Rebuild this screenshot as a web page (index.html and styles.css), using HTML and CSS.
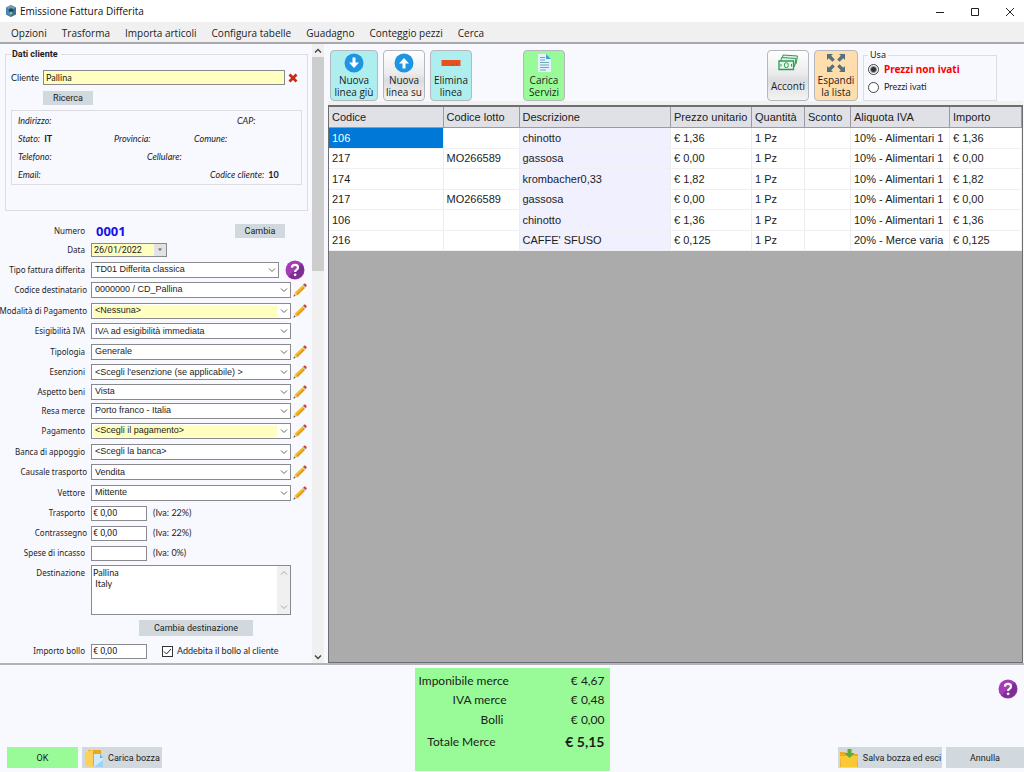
FILE: index.html
```html
<!DOCTYPE html>
<html lang="it">
<head>
<meta charset="utf-8">
<title>Emissione Fattura Differita</title>
<link rel="stylesheet" href="styles.css">
</head>
<body>
<svg class="defs" aria-hidden="true">
  <symbol id="pencil" viewBox="0 0 14 14">
    <path d="M.5 13.500 1.700 9.600 4.400 12.300z" fill="#e9c9a0"/>
    <path d="M.5 13.500 1.100 11.600 2.400 12.900z" fill="#444"/>
    <path d="M1.700 9.600 9.300 2.400 11.800 4.900 4.400 12.300z" fill="#f7bd22"/>
    <path d="M3.200 11.100 10.700 3.800 11.800 4.900 4.400 12.300z" fill="#e3981d"/>
    <path d="M9.300 2.400 10.200 1.500 12.700 4 11.800 4.900z" fill="#b9c4cc"/>
    <path d="M10.200 1.500 11 .8Q12 .2 13 1.200 14 2.200 13.500 3.200L12.700 4z" fill="#d03a22"/>
  </symbol>
  <symbol id="help" viewBox="0 0 20 20">
    <circle cx="10" cy="10" r="9.500" fill="#a43cb4"/>
    <path d="M16.700 3.300A9.500 9.500 0 0 1 3.300 16.700z" fill="#7c2f92"/>
    <path d="M6.900 7.600Q7 4.900 10 4.900 13 4.900 13 7.500 13 9 11.300 9.900 10.100 10.500 10.100 11.900" fill="none" stroke="#fff" stroke-width="2.200"/>
    <circle cx="10.100" cy="14.800" r="1.400" fill="#fff"/>
  </symbol>
</svg>

<header class="titlebar">
  <svg class="app-icon" viewBox="0 0 12 12"><path d="M6 0 11 2.500V9.500L6 12 1 9.500V2.500z" fill="#3b6f95"/><path d="M6 0 11 2.500 6 5 1 2.500z" fill="#6fa3a8"/><path d="M6 5V12L1 9.500V2.500z" fill="#4a86b8"/><circle cx="6" cy="5.500" r="2.200" fill="#1d3f78"/><circle cx="6" cy="8" r="1.500" fill="#9cc15a"/></svg>
  <h1>Emissione Fattura Differita</h1>
  <div class="window-buttons">
    <button aria-label="Riduci"><svg viewBox="0 0 10 10"><path d="M1 5.500H9"/></svg></button>
    <button aria-label="Ingrandisci"><svg viewBox="0 0 10 10"><path d="M1.500 1.500H8.500V8.500H1.500z"/></svg></button>
    <button aria-label="Chiudi"><svg viewBox="0 0 10 10"><path d="M1 1 9 9M9 1 1 9"/></svg></button>
  </div>
</header>
<nav class="menu">
  <button>Opzioni</button><button>Trasforma</button><button>Importa articoli</button><button>Configura tabelle</button><button>Guadagno</button><button>Conteggio pezzi</button><button>Cerca</button>
</nav>

<main class="main">
  <aside class="side">
    <div class="side-content">
      <fieldset class="client">
        <legend>Dati cliente</legend>
        <div class="client-row">
          <label for="cliente">Cliente</label>
          <input id="cliente" class="yellow" value="Pallina">
          <button class="clear" aria-label="Rimuovi cliente"><svg viewBox="0 0 10 10"><path d="M1.500 1.500 8.500 8.500M8.500 1.500 1.500 8.500" stroke="#c92a14" stroke-width="2.800"/></svg></button>
        </div>
        <button class="flat search">Ricerca</button>
        <div class="info">
          <div><i class="wide">Indirizzo:</i><i>CAP:</i></div>
          <div><i class="first">Stato: <b>IT</b></i><i class="second">Provincia:</i><i>Comune:</i></div>
          <div><i class="half">Telefono:</i><i>Cellulare:</i></div>
          <div><i class="most">Email:</i><i>Codice cliente: <b>10</b></i></div>
        </div>
      </fieldset>

      <form class="form">
        <span class="lab">Numero</span><div class="numrow"><strong>0001</strong><button type="button" class="flat change">Cambia</button></div>
        <label for="data">Data</label><div class="date"><input id="data" value="26/01/2022"><button type="button" aria-label="Apri calendario"><svg viewBox="0 0 6 4"><path d="M1 .5H5L3 3z" fill="#666"/></svg></button></div>
        <label for="tipo">Tipo fattura differita</label><div class="with-help"><select id="tipo" class="short"><option>TD01 Differita classica</option></select><button type="button" class="help" aria-label="Aiuto"><svg><use href="#help"/></svg></button></div>
        <label for="cod" class="near">Codice destinatario</label><select id="cod"><option>0000000 / CD_Pallina</option></select><button type="button" class="icon" aria-label="Modifica"><svg><use href="#pencil"/></svg></button>
        <label for="mod" class="near">Modalità di Pagamento</label><select id="mod" class="hl"><option>&lt;Nessuna&gt;</option></select><button type="button" class="icon" aria-label="Modifica"><svg><use href="#pencil"/></svg></button>
        <label for="esi">Esigibilità IVA</label><select id="esi"><option>IVA ad esigibilità immediata</option></select>
        <label for="tip">Tipologia</label><select id="tip"><option>Generale</option></select><button type="button" class="icon" aria-label="Modifica"><svg><use href="#pencil"/></svg></button>
        <label for="ese">Esenzioni</label><select id="ese"><option>&lt;Scegli l'esenzione (se applicabile) &gt;</option></select><button type="button" class="icon" aria-label="Modifica"><svg><use href="#pencil"/></svg></button>
        <label for="asp">Aspetto beni</label><select id="asp"><option>Vista</option></select><button type="button" class="icon" aria-label="Modifica"><svg><use href="#pencil"/></svg></button>
        <label for="resa">Resa merce</label><select id="resa"><option>Porto franco - Italia</option></select><button type="button" class="icon" aria-label="Modifica"><svg><use href="#pencil"/></svg></button>
        <label for="pag">Pagamento</label><select id="pag" class="hl"><option>&lt;Scegli il pagamento&gt;</option></select><button type="button" class="icon" aria-label="Modifica"><svg><use href="#pencil"/></svg></button>
        <label for="ban">Banca di appoggio</label><select id="ban"><option>&lt;Scegli la banca&gt;</option></select><button type="button" class="icon" aria-label="Modifica"><svg><use href="#pencil"/></svg></button>
        <label for="cau" class="near">Causale trasporto</label><select id="cau"><option>Vendita</option></select><button type="button" class="icon" aria-label="Modifica"><svg><use href="#pencil"/></svg></button>
        <label for="vet">Vettore</label><select id="vet"><option>Mittente</option></select><button type="button" class="icon" aria-label="Modifica"><svg><use href="#pencil"/></svg></button>
        <label for="tra">Trasporto</label><div class="money"><input id="tra" value="€ 0,00"><span>(Iva: 22%)</span></div>
        <label for="con" class="near">Contrassegno</label><div class="money"><input id="con" value="€ 0,00"><span>(Iva: 22%)</span></div>
        <label for="spe">Spese di incasso</label><div class="money"><input id="spe" value=""><span>(Iva: 0%)</span></div>
        <label for="des" class="top">Destinazione</label>
        <div class="dest"><textarea id="des">Pallina
 Italy</textarea><div class="mini-scroll"><svg viewBox="0 0 8 6"><path d="M1 4.500 4 1.500 7 4.500"/></svg><svg viewBox="0 0 8 6"><path d="M1 1.500 4 4.500 7 1.500"/></svg></div></div>
        <button type="button" class="flat dest-button">Cambia destinazione</button>
        <label for="bol">Importo bollo</label><div class="money"><input id="bol" value="€ 0,00"><label class="check"><input type="checkbox" checked>Addebita il bollo al cliente</label></div>
      </form>
    </div>
    <div class="scrollbar"><svg viewBox="0 0 8 6"><path d="M1 4.500 4 1.500 7 4.500"/></svg><div class="thumb"></div><svg viewBox="0 0 8 6"><path d="M1 1.500 4 4.500 7 1.500"/></svg></div>
  </aside>

  <section class="work">
    <div class="toolbar">
      <button class="tool aqua first-tool"><svg viewBox="0 0 20 20"><circle cx="10" cy="10" r="9.500" fill="#1d95e2"/><path d="M8.500 4.500H11.500V9.500H15L10 15 5 9.500H8.500z" fill="#fff"/></svg><span>Nuova<br>linea giù</span></button>
      <button class="tool silver"><svg viewBox="0 0 20 20"><circle cx="10" cy="10" r="9.500" fill="#1d95e2"/><path d="M8.500 15.500H11.500V10.500H15L10 5 5 10.500H8.500z" fill="#fff"/></svg><span>Nuova<br>linea su</span></button>
      <button class="tool aqua"><svg viewBox="0 0 20 20"><path d="M.5 7H19.500V13H.5z" fill="#e8501f"/><path d="M11 12H12M15 11H16" stroke="#a03a1a"/></svg><span>Elimina<br>linea</span></button>
      <button class="tool green"><svg viewBox="0 0 20 20"><path d="M4 1H12L17 6V19H4z" fill="#e4f3fb"/><path d="M12 1 17 6H12z" fill="#35a5e0"/><path d="M6 4.500H11M6 7H11M6 9.500H15M6 12H15M6 14.500H15M6 17H12" stroke="#6fa6c0"/></svg><span>Carica<br>Servizi</span></button>
      <span class="spacer"></span>
      <button class="tool silver acconti"><svg viewBox="0 0 20 20"><path d="M5 2 19.500 3 18 11 3 10z" fill="#e4f4e8" stroke="#2c9c50"/><path d="M3.500 4.500 18 5.500 16.500 13.500 2 12.500z" fill="#e4f4e8" stroke="#2c9c50"/><path d="M1 8H15.500V16.500H1z" fill="#e9f7ec" stroke="#2c9c50" stroke-width="1.300"/><ellipse cx="8.300" cy="12.200" rx="2" ry="2.600" fill="none" stroke="#2c9c50"/><path d="M3 11V13.500M13.500 11V13.500" stroke="#2c9c50"/></svg><span>Acconti</span></button>
      <button class="tool orange"><svg viewBox="0 0 20 20"><path d="M1 1H7L5.200 2.800 8.800 6.400 6.400 8.800 2.800 5.200 1 7zM19 1V7L17.200 5.200 13.600 8.800 11.200 6.400 14.800 2.800 13 1zM1 19V13L2.800 14.800 6.400 11.200 8.800 13.600 5.200 17.200 7 19zM19 19H13L14.800 17.200 11.200 13.600 13.600 11.200 17.200 14.800 19 13z" fill="#53707f"/></svg><span>Espandi<br>la lista</span></button>
      <fieldset class="use">
        <legend>Usa</legend>
        <label class="on"><input type="radio" name="usa" checked>Prezzi non ivati</label>
        <label><input type="radio" name="usa">Prezzi ivati</label>
      </fieldset>
    </div>
    <div class="grid">
      <table>
        <colgroup><col class="c1"><col class="c2"><col class="c3"><col class="c4"><col class="c5"><col class="c6"><col class="c7"><col class="c8"></colgroup>
        <thead><tr><th>Codice</th><th>Codice lotto</th><th>Descrizione</th><th>Prezzo unitario</th><th>Quantità</th><th>Sconto</th><th>Aliquota IVA</th><th>Importo</th></tr></thead>
        <tbody>
          <tr><td class="selected">106</td><td></td><td>chinotto</td><td>€ 1,36</td><td>1 Pz</td><td></td><td>10% - Alimentari 1</td><td>€ 1,36</td></tr>
          <tr><td>217</td><td>MO266589</td><td>gassosa</td><td>€ 0,00</td><td>1 Pz</td><td></td><td>10% - Alimentari 1</td><td>€ 0,00</td></tr>
          <tr><td>174</td><td></td><td>krombacher0,33</td><td>€ 1,82</td><td>1 Pz</td><td></td><td>10% - Alimentari 1</td><td>€ 1,82</td></tr>
          <tr><td>217</td><td>MO266589</td><td>gassosa</td><td>€ 0,00</td><td>1 Pz</td><td></td><td>10% - Alimentari 1</td><td>€ 0,00</td></tr>
          <tr><td>106</td><td></td><td>chinotto</td><td>€ 1,36</td><td>1 Pz</td><td></td><td>10% - Alimentari 1</td><td>€ 1,36</td></tr>
          <tr><td>216</td><td></td><td>CAFFE' SFUSO</td><td>€ 0,125</td><td>1 Pz</td><td></td><td>20% - Merce varia</td><td>€ 0,125</td></tr>
        </tbody>
      </table>
    </div>
  </section>
</main>

<footer class="footer">
  <div class="actions">
    <button class="flat ok">OK</button>
    <button class="flat load"><svg viewBox="0 0 20 20"><path d="M4 2H17V18H8z" fill="#eaa91c"/><path d="M1 4 9 2V19L1 18z" fill="#fdd05a"/><path d="M10 6H16L19 10V19H10z" fill="#cfeafa"/><path d="M10 19 19 12V19z" fill="#9dd3f3"/><path d="M16 6 19 10H16z" fill="#5db8ea"/></svg>Carica bozza</button>
  </div>
  <dl class="totals">
    <div><dt>Imponibile merce</dt><dd>€ 4,67</dd></div>
    <div><dt>IVA merce</dt><dd>€ 0,48</dd></div>
    <div class="stamps"><dt>Bolli</dt><dd>€ 0,00</dd></div>
    <div class="total"><dt>Totale Merce</dt><dd>€ 5,15</dd></div>
  </dl>
  <div class="end">
    <button class="help" aria-label="Aiuto"><svg><use href="#help"/></svg></button>
    <div class="actions right">
      <button class="flat save"><svg viewBox="0 0 20 20"><path d="M1 4H6L8 6H19V19H1z" fill="#e9ad20"/><path d="M1 8H19L18 19H2z" fill="#fcc936"/><path d="M8.500 1H12.500V5H15.500L10.500 10 5.500 5H8.500z" fill="#5fa83a"/></svg>Salva bozza ed esci</button>
      <button class="flat cancel">Annulla</button>
    </div>
  </div>
</footer>
</body>
</html>
```

FILE: styles.css
```css
* { box-sizing: border-box; }
body {
  margin: 0;
  min-height: 100vh;
  display: flex;
  flex-direction: column;
  background: #f8f8ff;
  color: #1c1c1c;
  font: 9px/12px Lato, sans-serif;
}
button, input, select, textarea { font: inherit; color: inherit; margin: 0; }
button { border: 0; padding: 0; background: none; white-space: nowrap; }
.defs { display: none; }

.titlebar { display: flex; align-items: center; height: 22px; padding: 0 9px 0 5px; background: #fff; }
.app-icon { width: 12px; height: 12px; }
.titlebar h1 { margin: 0 auto 0 3px; font: 10px/14px "Open Sans", sans-serif; color: #111; }
.window-buttons { display: flex; gap: 25px; }
.window-buttons button { width: 10px; height: 22px; }
.window-buttons svg { width: 10px; height: 10px; fill: none; stroke: #222; vertical-align: middle; }

.menu { display: flex; gap: 15px; height: 22px; padding: 1px 11px 0; background: #f0f0f0; border-bottom: 2px solid #a8a8ac; font: 10px/20px "Open Sans", sans-serif; }

.main { flex: 1; display: grid; grid-template-columns: 328px 1fr; }
.side { display: flex; justify-content: space-between; padding-right: 4px; }
.side-content { width: 308px; padding-left: 5px; }

fieldset { margin: 0; min-width: 0; border: 1px solid #dcdce2; }
.client { margin-top: 4px; height: 163px; padding: 10px 5px 0; }
.client legend { padding: 0 3px 0 1px; font-family: Roboto, sans-serif; font-weight: bold; }
.client-row { display: flex; align-items: center; gap: 3px; }
.client-row label { width: 29px; }
input { border: 1px solid #8a8a8e; background: #fff; padding: 0 2px; outline: 0; height: 15px; }
.client-row .yellow { flex: 1; background: #ffffc0; }
.clear { width: 10px; height: 10px; margin-right: 4px; }
.clear svg { display: block; width: 10px; height: 10px; }
.flat { background: #d1d9de; text-align: center; height: 14px; font-family: Roboto, sans-serif; }
.search { display: block; width: 50px; margin: 6px 0 5px 32px; }
.info { height: 75px; padding: 4px 6px; border: 1px solid #dcdce2; display: flex; flex-direction: column; gap: 6px; }
.info div { display: flex; }
.info b { font-style: normal; margin-left: 2px; }
.wide { width: 219px; }
.first { width: 96px; }
.second { width: 80px; }
.half { width: 129px; }
.most { width: 192px; }

.form {
  display: grid;
  grid-template-columns: 86px 200px 16px;
  grid-template-rows: 18px 20px 19px 21px 21px 20px 21px 20px 19px 19px 21px 21px 20px 21px 20px 20px 20px 54px 22px 24px;
  align-items: center;
  margin-top: 11px;
}
.form > label, .form > .lab { grid-column: 1; padding-right: 6px; text-align: right; justify-self: end; white-space: nowrap; font: 8px/12px "Noto Sans", sans-serif; }
.form > .near { padding-right: 4px; }
.form > select, .form > div { grid-column: 2; }
.form > .with-help { grid-column: 2 / 4; display: flex; align-items: center; gap: 6px; height: 16px; }
.icon { grid-column: 3; justify-self: end; }
.icon svg { display: block; width: 14px; height: 14px; }
.help svg { display: block; width: 20px; height: 20px; }
.numrow { display: flex; justify-content: space-between; align-items: center; padding: 0 6px 0 5px; }
.numrow strong { font: bold 13px/18px "Noto Sans", sans-serif; color: #1414e6; }
.change { width: 50px; }
.date { display: flex; width: 76px; height: 14px; border: 1px solid #8a8a8e; background: #ffffc0; }
.date input { width: 62px; height: 12px; border: 0; background: none; font-family: Roboto, sans-serif; }
.date button { width: 13px; background: #e2e2e4; }
.date svg { display: block; width: 6px; height: 4px; margin: auto; }
select {
  appearance: none;
  width: 100%;
  height: 16px;
  padding: 0 12px 1px 3px;
  border: 1px solid #8a8a8e;
  border-radius: 0;
  background: #fff url("data:image/svg+xml,%3Csvg xmlns='http://www.w3.org/2000/svg' width='8' height='6'%3E%3Cpath d='M1 1.500 4 4.500 7 1.500' fill='none' stroke='%23666'/%3E%3C/svg%3E") no-repeat right 2px center;
  font-family: "Liberation Sans", sans-serif;
}
.with-help .short { width: 188px; }
.hl {
  box-shadow: inset 0 0 0 1px #fff;
  background-color: #ffffc0;
  background-image: url("data:image/svg+xml,%3Csvg xmlns='http://www.w3.org/2000/svg' width='8' height='6'%3E%3Cpath d='M1 1.500 4 4.500 7 1.500' fill='none' stroke='%23666'/%3E%3C/svg%3E"), linear-gradient(#fff, #fff);
  background-position: right 2px center, right center;
  background-size: 8px 6px, 13px 100%;
}
.money { display: flex; align-items: center; gap: 6px; }
.money > input { width: 56px; padding: 0 1px; font-family: Roboto, sans-serif; }
.form > .top { align-self: start; margin-top: 4px; }
.dest { display: flex; height: 50px; border: 1px solid #8a8a8e; background: #fff; }
.dest textarea { flex: 1; border: 0; padding: 1px; line-height: 11px; resize: none; outline: 0; overflow: hidden; }
.mini-scroll { display: flex; flex-direction: column; justify-content: space-between; align-items: center; width: 13px; padding: 4px 0; background: #f0f0f0; }
.mini-scroll svg, .scrollbar svg { width: 8px; height: 6px; fill: none; stroke: #aaa; }
.dest-button { grid-column: 2; width: 114px; height: 16px; margin-left: 48px; }
.check { display: flex; align-items: center; gap: 4px; margin-left: 9px; }
.check input { appearance: none; width: 11px; height: 11px; padding: 0; border-color: #333; background: #fff url("data:image/svg+xml,%3Csvg xmlns='http://www.w3.org/2000/svg' width='9' height='9'%3E%3Cpath d='M1 4.500 3.500 7 8 2' fill='none' stroke='%23222'/%3E%3C/svg%3E"); }

.scrollbar { width: 12px; display: flex; flex-direction: column; align-items: center; background: #f0f0f0; padding: 4px 0 3px; }
.scrollbar svg { stroke: #444; stroke-width: 1.400; }
.scrollbar .thumb { width: 12px; height: 214px; margin: 3px 0 auto; background: #cdcdcd; }

.work { display: flex; flex-direction: column; min-width: 0; padding-right: 1px; }
.toolbar { display: flex; height: 61px; padding: 6px 26px 0 2px; gap: 5px; border-bottom: 4px solid #f0f0f0; }
.tool { width: 42px; height: 51px; border: 1px solid #b4b8bc; border-radius: 4px; display: flex; flex-direction: column; align-items: center; padding-top: 2px; font: 10px/12px "Open Sans", sans-serif; }
.tool svg { width: 20px; height: 20px; margin-bottom: 1px; }
.first-tool { width: 48px; }
.aqua { background: #afeeee; }
.silver { background: linear-gradient(#fff, #ececee 45%, #dcdcde 60%, #f4f4f4); }
.green { background: #98fb98; margin-left: 46px; }
.orange { width: 44px; background: #ffdead; }
.acconti span { margin-top: 6px; }
.spacer { flex: 1; }
.use { width: 134px; height: 51px; padding: 0 4px; border-color: #dcdce2; }
.use legend { padding: 0 2px; height: 10px; font: 9px/10px "Noto Sans", sans-serif; }
.use label { display: flex; align-items: center; gap: 5px; height: 18px; }
.use .on { font: bold 10px/12px "Noto Sans", sans-serif; color: #f00; }
.use input { appearance: none; width: 11px; height: 11px; padding: 0; border: 1px solid #444; border-radius: 50%; background: #fff; }
.use input:checked { background: radial-gradient(circle, #333 2px, #fff 4px); }

.grid { flex: 1; background: #ababab; border: 1px solid #6e6e72; border-top-width: 2px; }
table { width: 100%; table-layout: fixed; border-collapse: collapse; background: #fff; font: 11px/14px "Liberation Sans", sans-serif; border-bottom: 1px solid #77777b; }
.c1 { width: 114px; }
.c2 { width: 76px; }
.c4 { width: 81px; }
.c5 { width: 53px; }
.c6 { width: 46px; }
.c7 { width: 99px; }
.c8 { width: 72px; }
th, td { text-align: left; font-weight: normal; padding: 0 3px; white-space: nowrap; overflow: hidden; height: 20px; }
th { background: #dfe1e6; border-right: 1px solid #9a9aa0; border-bottom: 1px solid #9a9aa0; }
td { border-right: 1px solid #ededf0; border-bottom: 1px solid #f0f0f2; }
tbody tr:nth-child(odd) td { height: 21px; }
td:nth-child(3) { background: #f0f0ff; }
.selected { background: #0078d7; color: #fff; }

.footer { display: grid; grid-template-columns: 1fr 195px 1fr; min-height: 109px; padding-top: 3px; border-top: 2px solid #b4b4b8; }
.actions { display: flex; gap: 4px; align-self: end; padding: 0 0 4px 7px; }
.actions .flat { height: 21px; display: flex; align-items: center; justify-content: center; gap: 4px; }
.actions svg { width: 20px; height: 20px; }
.actions .ok { width: 71px; background: #98fb98; }
.load { width: 80px; }
.save { width: 104px; }
.cancel { width: 78px; }
.totals { margin: 0 0 1px; background: #98fb98; padding: 3px 5px 0 4px; font: 12px/19px Lato, sans-serif; }
.totals div { display: grid; grid-template-columns: 88px 1fr; }
.totals dt, .totals dd { margin: 0; text-align: right; white-space: nowrap; }
.totals .stamps { line-height: 22px; }
.stamps dt { padding-right: 3px; }
.totals .total { line-height: 22px; }
.total dd { font-size: 14px; font-weight: bold; }
.total dt { padding-right: 11px; }
.end { display: flex; flex-direction: column; justify-content: space-between; align-items: flex-end; }
.end .help { margin: 11px 6px 0 0; }
```
